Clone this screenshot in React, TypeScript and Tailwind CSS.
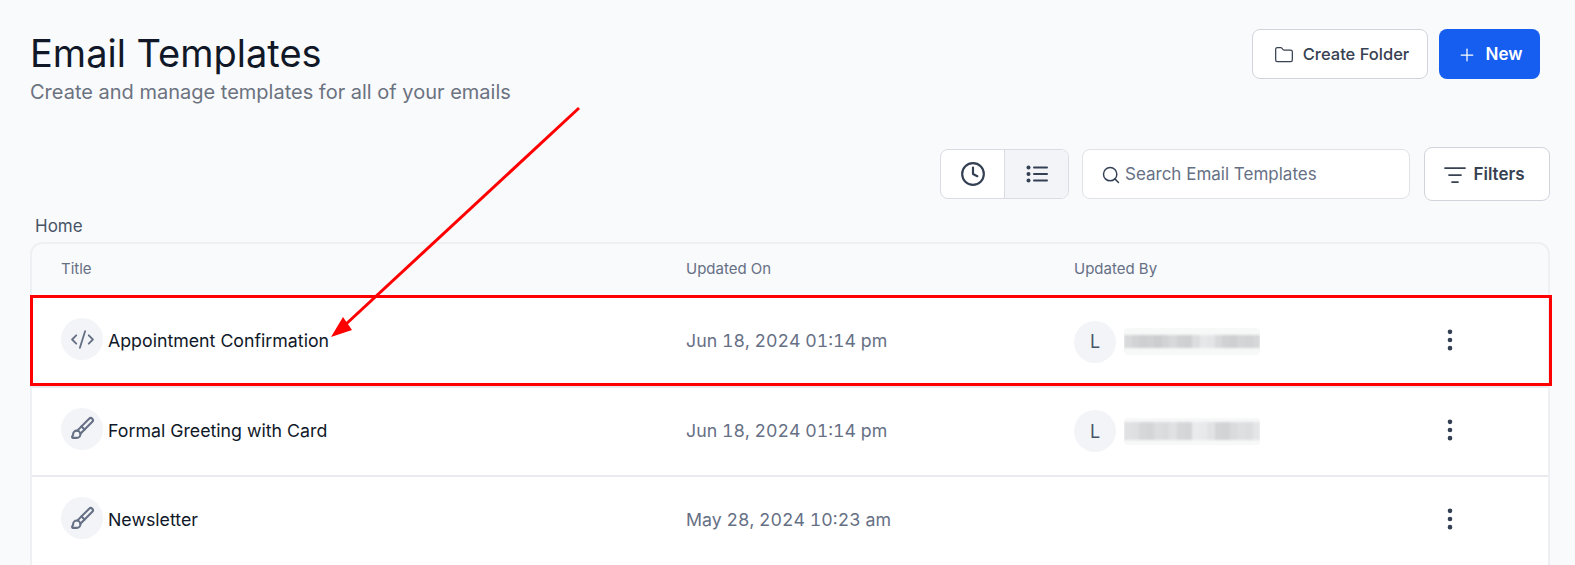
import { Brush, Clock, CodeXml, EllipsisVertical, Folder, ListFilter, Plus, Search } from "lucide-react";

const rows = [
  { title: "Appointment Confirmation", date: "Jun 18, 2024 01:14 pm", icon: "code", core: 13, by: [216, 210, 206, 208, 204, 210, 216, 208, 206, 220, 230, 228, 216, 208, 206, 212, 210, 214] },
  { title: "Formal Greeting with Card", date: "Jun 18, 2024 01:14 pm", icon: "brush", core: 18, by: [224, 222, 214, 212, 220, 218, 224, 214, 212, 234, 232, 226, 212, 210, 218, 222, 220, 228] },
  { title: "Newsletter", date: "May 28, 2024 10:23 am", icon: "brush", core: 0, by: null },
];

function BlurredName({ shades, core }: { shades: number[]; core: number }) {
  return (
    <div className="ml-[8px] flex h-[27px] w-[136px] items-center overflow-hidden rounded-sm bg-[#f7f8f8]">
      <div className="flex w-full blur-[1px]" style={{ height: core }}>
        {shades.map((s, i) => (
          <span key={i} className="h-full flex-1" style={{ backgroundColor: `rgb(${s},${s + 1},${s + 3})` }} />
        ))}
      </div>
    </div>
  );
}

function ListIcon() {
  return (
    <svg width="22" height="18" viewBox="0 0 22 18" fill="none" stroke="currentColor" strokeWidth="2">
      <circle cx="2.5" cy="2.5" r="2" fill="currentColor" stroke="none" />
      <circle cx="2.5" cy="9" r="2" fill="currentColor" stroke="none" />
      <circle cx="2.5" cy="15.5" r="2" fill="currentColor" stroke="none" />
      <line x1="8" y1="2.5" x2="21" y2="2.5" strokeLinecap="round" />
      <line x1="8" y1="9" x2="21" y2="9" strokeLinecap="round" />
      <line x1="8" y1="15.5" x2="21" y2="15.5" strokeLinecap="round" />
    </svg>
  );
}

export default function App() {
  return (
    <div className="relative h-[565px] w-[1575px] overflow-hidden bg-[#f9fafc] font-['Inter',sans-serif] text-[#101828]">
      <div className="pl-[30px] pr-[25px] pt-[29px]">
        <div className="flex items-start justify-between pr-[10px]">
          <div>
            <h1 className="mt-[2px] text-[38px] leading-[44px] font-normal">Email Templates</h1>
            <p className="mt-[3px] text-[20px] leading-[28px] text-[#6b7280]">Create and manage templates for all of your emails</p>
          </div>
          <div className="flex gap-[11px]">
            <button className="flex h-[50px] w-[176px] items-center justify-center gap-[9px] rounded-lg border border-[#d1d5db] bg-white pl-[3px] pt-[1px] text-[16.5px] font-medium text-[#374151]">
              <Folder size={20} strokeWidth={1.5} />
              Create Folder
            </button>
            <button className="flex h-[50px] w-[101px] items-center justify-center gap-[9px] rounded-lg bg-[#155eef] pt-[2px] text-[17px] font-semibold text-white">
              <Plus size={20} strokeWidth={1.5} />
              New
            </button>
          </div>
        </div>

        <div className="mt-[41px] flex items-center justify-end gap-[14px]">
          <div className="-mr-px flex h-[50px] w-[129px] overflow-hidden rounded-lg border border-[#d9dce3] bg-white text-[#344054]">
            <div className="flex w-[64px] items-center justify-center border-r border-[#d9dce3]">
              <Clock size={26} strokeWidth={2} />
            </div>
            <div className="flex flex-1 items-center justify-center bg-[#f2f4f7]">
              <ListIcon />
            </div>
          </div>
          <div className="flex h-[50px] w-[328px] items-center gap-[4px] rounded-lg border border-[#e0e2e8] bg-white pl-[18px] pt-[2px] text-[17px] text-[#667085]">
            <Search size={20} strokeWidth={1.75} className="text-[#344054]" />
            Search Email Templates
          </div>
          <button className="flex h-[54px] w-[126px] items-center justify-center gap-[6px] rounded-lg border border-[#d1d5db] bg-white pr-[6px] pt-[1px] text-[17px] font-semibold text-[#374151]">
            <ListFilter size={24} strokeWidth={1.75} />
            Filters
          </button>
        </div>

        <div className="mt-[13px] pl-[5px] text-[17px] leading-[24px] text-[#475467]">Home</div>

        <div className="mt-[4px] overflow-hidden rounded-t-xl border-x-2 border-t-2 border-[#eef0f3]">
          <div className="flex h-[54px] items-center pb-[3px] text-[15px] text-[#667085]">
            <div className="w-[654px] pl-[29px]">Title</div>
            <div className="w-[388px]">Updated On</div>
            <div>Updated By</div>
          </div>
          {rows.map((row) => (
            <div key={row.title} className="flex h-[89.5px] items-center border-b-2 border-[#e9ebef] bg-white">
              <div className="flex w-[654px] items-center gap-[5px] pl-[29px]">
                <div className="mb-[5px] flex h-[42px] w-[42px] items-center justify-center rounded-full bg-[#f2f4f7] text-[#667085]">
                  {row.icon === "code" ? <CodeXml size={25} strokeWidth={1.75} /> : <Brush size={25} strokeWidth={2} />}
                </div>
                <span className="text-[17.75px] text-[#101828]">{row.title}</span>
              </div>
              <div className="w-[388px] text-[17.75px] tabular-nums text-[#667085]">{row.date}</div>
              <div className="flex w-[361.5px] items-center">
                {row.by && (
                  <>
                    <div className="flex h-[42px] w-[42px] items-center justify-center rounded-full bg-[#f2f4f7] text-[18px] text-[#475467]">L</div>
                    <BlurredName shades={row.by} core={row.core} />
                  </>
                )}
              </div>
              <EllipsisVertical size={28} strokeWidth={2} className="mb-[3px] text-[#344054]" />
            </div>
          ))}
        </div>
      </div>

      {/* red annotation drawn over the page */}
      <div className="absolute left-[30px] top-[295px] h-[91px] w-[1522px] border-[3px] border-[#ff0000]" />
      <svg className="absolute left-0 top-0" width="1575" height="565" fill="none">
        <line x1="579" y1="108" x2="345" y2="325" stroke="#ff0000" strokeWidth="3" />
        <polygon points="331,337 343,317 352,330" fill="#ff0000" />
      </svg>
    </div>
  );
}
